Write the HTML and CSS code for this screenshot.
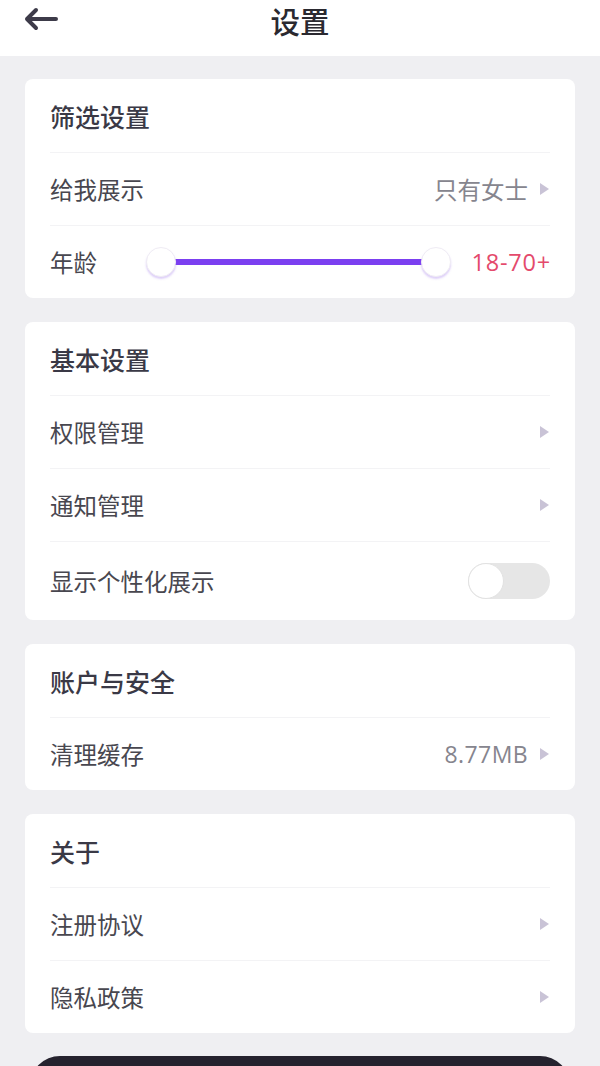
FILE: index.html
```html
<!DOCTYPE html>
<html lang="zh-CN">
<head>
<meta charset="utf-8">
<title>设置</title>
<link rel="stylesheet" href="styles.css">
</head>
<body>
<header class="topbar">
  <span class="back">
    <svg width="36" height="24" viewBox="0 0 36 24"><path d="M33 12H4M13 3L4 12l9 9" fill="none" stroke="#3d3b49" stroke-width="4" stroke-linecap="round" stroke-linejoin="round"/></svg>
  </span>
  <h1 class="title">设置</h1>
  <span></span>
</header>
<main class="content">
  <section class="card">
    <div class="card-title">筛选设置</div>
    <div class="row"><span class="label">给我展示</span><span class="right"><span class="value">只有女士</span><i class="tri"></i></span></div>
    <div class="row">
      <span class="label age">年龄</span>
      <div class="slider"><div class="track"></div><span class="thumb l"></span><span class="thumb r"></span></div>
      <span class="range">18-70+</span>
    </div>
  </section>
  <section class="card">
    <div class="card-title">基本设置</div>
    <div class="row"><span class="label">权限管理</span><span class="right"><i class="tri"></i></span></div>
    <div class="row"><span class="label">通知管理</span><span class="right"><i class="tri"></i></span></div>
    <div class="row tall"><span class="label">显示个性化展示</span><span class="toggle"><span class="knob"></span></span></div>
  </section>
  <section class="card">
    <div class="card-title">账户与安全</div>
    <div class="row"><span class="label">清理缓存</span><span class="right"><span class="value num">8.77MB</span><i class="tri"></i></span></div>
  </section>
  <section class="card">
    <div class="card-title">关于</div>
    <div class="row"><span class="label">注册协议</span><span class="right"><i class="tri"></i></span></div>
    <div class="row"><span class="label">隐私政策</span><span class="right"><i class="tri"></i></span></div>
  </section>
  <div class="logout"></div>
</main>
</body>
</html>
```

FILE: styles.css
```css
html, body {
  margin: 0;
  padding: 0;
}
body {
  width: 600px;
  height: 1066px;
  overflow: hidden;
  background: #efeff2;
  font-family: "Noto Sans CJK SC", "Noto Sans", sans-serif;
  color: #45444d;
}
.topbar {
  height: 56px;
  background: #fff;
  display: grid;
  grid-template-columns: 1fr auto 1fr;
  align-items: center;
}
.back {
  padding-left: 23px;
  display: flex;
  align-items: center;
  margin-top: -18px;
}
.title {
  margin: 0;
  font-size: 29.5px;
  font-weight: 500;
  color: #2a2930;
  line-height: 40px;
  margin-top: -16px;
}
.content {
  padding: 23px 25px 0;
  display: flex;
  flex-direction: column;
  gap: 24px;
}
.card {
  background: #fff;
  border-radius: 8px;
  padding: 0 25px;
}
.card-title {
  height: 73px;
  display: flex;
  align-items: center;
  font-size: 25px;
  font-weight: 500;
  color: #3a3946;
}
.row {
  height: 73px;
  border-top: 1px solid #f3f3f5;
  box-sizing: border-box;
  display: flex;
  align-items: center;
  justify-content: space-between;
  font-size: 23.5px;
}
.row.tall {
  height: 79px;
}
.label {
  color: #48474f;
}
.right {
  display: flex;
  align-items: center;
  gap: 12px;
}
.value {
  color: #86858e;
}
.num {
  font-family: "Open Sans", "Noto Sans", sans-serif;
  font-size: 23px;
  letter-spacing: 0.4px;
}
.tri {
  display: block;
  width: 0;
  height: 0;
  border-top: 6px solid transparent;
  border-bottom: 6px solid transparent;
  border-left: 9px solid #c9c3d6;
  margin-right: 1px;
}
.age {
  width: 96px;
  flex: none;
}
.slider {
  position: relative;
  flex: 1;
  height: 30px;
}
.track {
  position: absolute;
  left: 14px;
  right: 14px;
  top: 12px;
  height: 6px;
  background: #7b3ff0;
}
.thumb {
  position: absolute;
  top: 0;
  width: 28px;
  height: 28px;
  border-radius: 50%;
  background: #fff;
  border: 1px solid #efecf4;
  box-shadow: 0 2px 2px rgba(160, 120, 235, 0.35);
}
.thumb.l { left: 0; }
.thumb.r { right: 0; }
.range {
  margin-left: 20px;
  color: #e44a6c;
  font-family: "Open Sans", "Noto Sans", sans-serif;
  font-size: 23.5px;
  letter-spacing: 0.8px;
  margin-right: -1px;
}
.toggle {
  width: 82px;
  height: 36px;
  border-radius: 18px;
  background: #e6e6e6;
  display: flex;
  align-items: center;
}
.knob {
  width: 36px;
  height: 36px;
  box-sizing: border-box;
  border-radius: 50%;
  background: #fff;
  border: 1px solid #e2e2e2;
}
.logout {
  height: 60px;
  margin: -1px 5px 0;
  border-radius: 30px;
  background: #25222e;
}
```
